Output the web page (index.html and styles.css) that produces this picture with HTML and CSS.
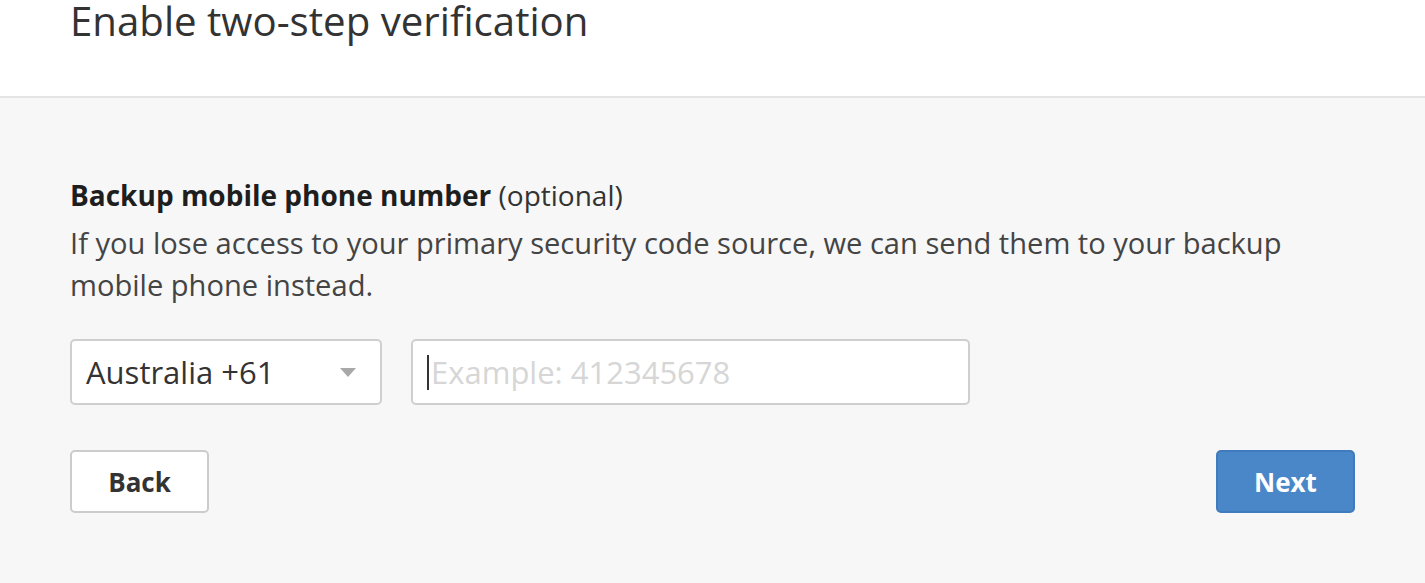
FILE: index.html
```html
<!DOCTYPE html>
<html lang="en">
<head>
<meta charset="utf-8">
<title>Enable two-step verification</title>
<link rel="stylesheet" href="styles.css">
</head>
<body>
<header class="header">
  <h1 class="title">Enable two-step verification</h1>
</header>
<main class="content">
  <div class="label"><strong>Backup mobile phone number</strong> (optional)</div>
  <p class="desc">If you lose access to your primary security code source, we can send them to your backup mobile phone instead.</p>
  <div class="fields">
    <div class="select">
      <span class="select-value">Australia +61</span>
      <span class="arrow"></span>
    </div>
    <div class="input-wrap">
      <input class="input" type="text" placeholder="Example: 412345678">
      <span class="caret"></span>
    </div>
  </div>
  <div class="actions">
    <button class="btn btn-back">Back</button>
    <button class="btn btn-next">Next</button>
  </div>
</main>
</body>
</html>
```
FILE: styles.css
```css
html, body {
  margin: 0;
  padding: 0;
}
body {
  font-family: "Open Sans", "Noto Sans", sans-serif;
  background: #f7f7f7;
  color: #333;
}
.header {
  background: #fff;
  height: 96px;
  border-bottom: 2px solid #e4e4e4;
  padding: 0 70px;
  box-sizing: content-box;
}
.title {
  margin: 0;
  font-size: 40.2px;
  font-weight: 400;
  line-height: 42px;
  color: #333;
}
.content {
  padding: 76px 70px 0;
}
.label {
  font-size: 28px;
  line-height: 42px;
  color: #333;
}
.label strong {
  font-weight: 700;
  color: #1e1e1e;
}
.label .opt {
  font-size: 28.6px;
}
.desc {
  margin: 6px 0 0;
  font-size: 29.1px;
  line-height: 42px;
  color: #444;
  max-width: 1250px;
}
.fields {
  display: flex;
  gap: 29px;
  margin-top: 33px;
}
.select {
  width: 312px;
  height: 66px;
  box-sizing: border-box;
  border: 2px solid #cfcfcf;
  border-radius: 5px;
  background: #fff;
  display: flex;
  align-items: center;
  justify-content: space-between;
  padding: 0 24px 0 14px;
}
.select-value {
  font-size: 31px;
  color: #333;
}
.arrow {
  width: 0;
  height: 0;
  border-left: 8px solid transparent;
  border-right: 8px solid transparent;
  border-top: 9px solid #a8a8a8;
}
.input-wrap {
  position: relative;
  width: 559px;
  height: 66px;
}
.input {
  width: 100%;
  height: 100%;
  box-sizing: border-box;
  border: 2px solid #cfcfcf;
  border-radius: 5px;
  background: #fff;
  padding: 0 16px 0 18px;
  font-family: "Open Sans", "Noto Sans", sans-serif;
  font-size: 31px;
  color: #333;
  outline: none;
}
.input::placeholder {
  color: #d6d6d6;
}
.caret {
  position: absolute;
  left: 16px;
  top: 16px;
  width: 2px;
  height: 35px;
  background: #333;
}
.actions {
  display: flex;
  justify-content: space-between;
  margin-top: 45px;
}
.btn {
  width: 139px;
  height: 63px;
  border-radius: 5px;
  font-family: "Open Sans", "Noto Sans", sans-serif;
  font-size: 26px;
  font-weight: 700;
  cursor: pointer;
}
.btn-back {
  background: #fff;
  border: 2px solid #cccccc;
  color: #333;
}
.btn-next {
  background: #4a87c8;
  border: 2px solid #3f7bbd;
  color: #fff;
}
```
